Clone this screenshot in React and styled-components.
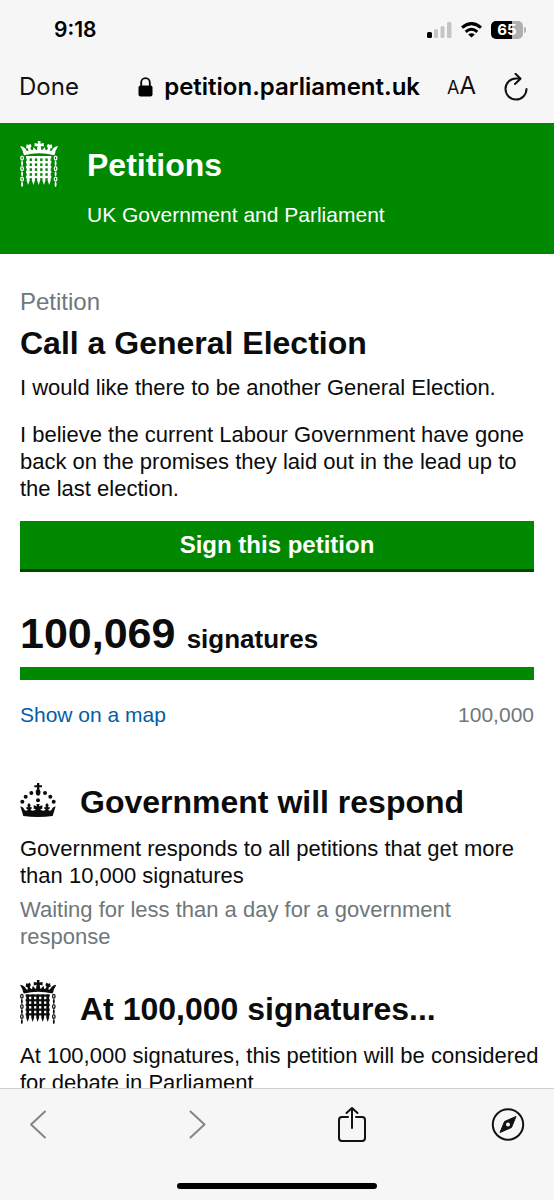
import React from 'react'
import styled, { createGlobalStyle } from 'styled-components'

const green = '#008800'
const ink = '#0b0c0c'
const grey = '#6f777b'
const chrome = '#f6f6f7'
const systemFont = 'Inter, "Liberation Sans", sans-serif'

const GlobalStyle = createGlobalStyle`
  * {
    box-sizing: border-box;
  }
  body {
    margin: 0;
    background: #fff;
    color: ${ink};
    font: 21px/27px "Liberation Sans", Arial, sans-serif;
  }
  h1, h2, p {
    margin: 0;
  }
`

const links = [0, 1, 2, 3, 4, 5]
const bars = [50, 66, 82, 98, 114]

const Portcullis = ({ width, height }) => {
  return (
    <svg width={width} height={height} viewBox='30 34 115 140' fill='currentColor' aria-hidden='true'>
      <path d='M42 77 L38 67 Q88 54 138 67 L134 77 Q88 66 42 77 Z' />
      <path d='M42 72 L30 49 Q40 50 45 56 L52 66 Z M134 72 L146 49 Q136 50 131 56 L124 66 Z' />
      <path d='M56 68 L54 57 L48 55 L50 44 L56 46 L61 42 L65 50 L61 56 L68 66 Z M120 68 L122 57 L128 55 L126 44 L120 46 L115 42 L111 50 L115 56 L108 66 Z' />
      <path d='M84 34 h8 v8 l10 -2 v11 l-9 -2 l2 14 h-14 l2 -14 l-9 2 v-11 l10 2 z' />
      <path d='M68 64 L71 52 L79 62 Z M108 64 L105 52 L97 62 Z' />
      {bars.map(x => {
        return <path key={x} d={`M${x} 80 h9 v74 l-4.5 14 l-4.5 -14 z`} />
      })}
      {[80, 95, 110, 125, 140].map(y => {
        return <rect key={y} x='48' y={y} width='77' height='7' />
      })}
      <g fill='none' stroke='currentColor' strokeWidth='4'>
        {links.map(i => {
          return (
            <React.Fragment key={i}>
              <ellipse cx='36' cy={86 + i * 16} rx={i % 2 ? 1 : 4} ry='6' />
              <ellipse cx='138' cy={86 + i * 16} rx={i % 2 ? 1 : 4} ry='6' />
            </React.Fragment>
          )
        })}
      </g>
    </svg>
  )
}

const Crown = () => {
  return (
    <svg width='36' height='34' viewBox='31 32 108 102' fill='currentColor' aria-hidden='true'>
      <path d='M82 32 h7 v7 h8 v6 h-8 v6 q5 4 3 13 q-2 6 -6.500 6 q-5 0 -7 -6 q-2 -9 3.500 -13 v-6 h-8 v-6 h8 z' />
      <circle cx='65' cy='62' r='6' />
      <circle cx='106' cy='62' r='6' />
      <circle cx='48' cy='73' r='6' />
      <circle cx='122' cy='73' r='6' />
      <circle cx='38' cy='88' r='6' />
      <circle cx='132' cy='88' r='6' />
      <circle cx='85' cy='84' r='6' />
      <path d='M32 102 Q42 104 45 113 Q49 118 55 112 L50 109 V104 L55 105 L53 98 L58 92 L63 98 L61 105 L66 104 V109 L62 112 Q70 119 79 111 L72 109 V99 L82 102 L80 95 H90 L88 102 L98 99 V109 L91 111 Q100 119 108 112 L104 109 V104 L109 105 L107 98 L112 92 L117 98 L115 105 L120 104 V109 L115 112 Q121 118 125 113 Q128 104 138 102 L129 131 Q85 137 41 131 Z' />
    </svg>
  )
}

const App = () => {
  return (
    <Screen>
      <GlobalStyle />
      <StatusBar>
        <span>9:18</span>
        <StatusIcons>
          <svg width='25' height='16' viewBox='0 0 25 16' aria-hidden='true'>
            <rect x='0' y='10' width='5' height='6' rx='1.5' />
            <g fill='#c5c5c7'>
              <rect x='7' y='7' width='4' height='9' rx='1.5' />
              <rect x='13.500' y='4' width='4' height='12' rx='1.5' />
              <rect x='20' y='0' width='4.500' height='16' rx='1.5' />
            </g>
          </svg>
          <svg width='21' height='16' viewBox='0 0 21 16' fill='none' stroke='#000' strokeWidth='3' aria-hidden='true'>
            <path d='M1 5.600 Q10.500 -2.400 20 5.600' />
            <path d='M4.700 9.800 Q10.500 4.700 16.300 9.800' />
            <path d='M10.500 15.500 L7.200 12.500 Q10.500 10 13.800 12.500 Z' fill='#000' stroke='none' />
          </svg>
          <Battery>
            <Charge>65</Charge>
          </Battery>
        </StatusIcons>
      </StatusBar>
      <AddressBar>
        <ChromeButton>Done</ChromeButton>
        <Address>
          <svg width='15' height='20' viewBox='0 0 15 20' aria-hidden='true'>
            <path d='M3.200 9 V5.500 a4.300 4.300 0 0 1 8.600 0 V9' fill='none' stroke='#000' strokeWidth='1.800' />
            <rect x='0.500' y='8.500' width='14' height='11' rx='2' />
          </svg>
          petition.parliament.uk
        </Address>
        <TextSize aria-label='Text size'>
          <small>A</small>A
        </TextSize>
        <ChromeButton aria-label='Reload'>
          <svg width='24' height='28' viewBox='0 0 24 28' fill='none' stroke='#111' strokeWidth='2' strokeLinecap='round' strokeLinejoin='round'>
            <path d='M22.500 16 A10.500 10.500 0 1 1 12 5.500 H16' />
            <path d='M11.500 0.800 L16.500 5.800 L11 11' />
          </svg>
        </ChromeButton>
      </AddressBar>
      <Content>
        <Banner>
          <Portcullis width={38} height={46} />
          <div>
            <SiteName href='#petitions'>Petitions</SiteName>
            <p>UK Government and Parliament</p>
          </div>
        </Banner>
        <Main>
          <Caption>Petition</Caption>
          <Title>Call a General Election</Title>
          <Copy>I would like there to be another General Election.</Copy>
          <Background>
            I believe the current Labour Government have gone back on the promises they laid out in the lead up to the last election.
          </Background>
          <SignButton>Sign this petition</SignButton>
          <Count>
            <strong>100,069</strong> signatures
          </Count>
          <Progress role='progressbar' aria-label='Signatures' aria-valuenow='100069' aria-valuemax='100000' />
          <Totals>
            <MapLink href='#map'>Show on a map</MapLink>
            <Goal>100,000</Goal>
          </Totals>
          <Threshold>
            <SectionHead>
              <Crown />
              <h2>Government will respond</h2>
            </SectionHead>
            <Copy>Government responds to all petitions that get more than 10,000 signatures</Copy>
            <Waiting>Waiting for less than a day for a government response</Waiting>
          </Threshold>
          <Threshold>
            <SectionHead>
              <Portcullis width={36} height={44} />
              <h2>At 100,000 signatures...</h2>
            </SectionHead>
            <Copy>At 100,000 signatures, this petition will be considered for debate in Parliament</Copy>
          </Threshold>
        </Main>
      </Content>
      <BottomBar>
        <Toolbar>
          <ChromeButton aria-label='Back'>
            <svg width='36' height='36' viewBox='0 0 36 36' fill='none' stroke='#858587' strokeWidth='2' strokeLinecap='round' strokeLinejoin='round'>
              <path d='M25 4.500 L11 17.500 L25 30.500' />
            </svg>
          </ChromeButton>
          <ChromeButton aria-label='Forward'>
            <svg width='36' height='36' viewBox='0 0 36 36' fill='none' stroke='#858587' strokeWidth='2' strokeLinecap='round' strokeLinejoin='round'>
              <path d='M13.500 4.500 L27.500 17.500 L13.500 30.500' />
            </svg>
          </ChromeButton>
          <ChromeButton aria-label='Share'>
            <svg width='36' height='36' viewBox='0 0 36 36' fill='none' stroke='#111' strokeWidth='2' strokeLinecap='round' strokeLinejoin='round'>
              <path d='M15 10 H9 Q6 10 6 13 V31 Q6 34 9 34 H29 Q32 34 32 31 V13 Q32 10 29 10 H23' />
              <path d='M19 21 V1 M13.500 6 L19 1 L24.500 6' />
            </svg>
          </ChromeButton>
          <ChromeButton aria-label='Open in browser'>
            <svg width='36' height='36' viewBox='0 0 36 36'>
              <circle cx='18' cy='17.500' r='15.200' fill='none' stroke='#111' strokeWidth='2' />
              <path d='M26 9.500 L21.500 20.500 L10 25.500 L14.500 14.500 Z' fill='#111' stroke='#111' strokeLinejoin='round' />
              <circle cx='18' cy='17.500' r='2' fill={chrome} />
            </svg>
          </ChromeButton>
        </Toolbar>
        <HomeIndicator />
      </BottomBar>
    </Screen>
  )
}

const Screen = styled.div`
  display: flex;
  flex-direction: column;
  height: 100vh;
`
const StatusBar = styled.div`
  display: flex;
  justify-content: space-between;
  align-items: center;
  height: 60px;
  padding: 0 31px 0 54px;
  background: ${chrome};
  color: #000;
  font: 600 21px/24px ${systemFont};
`
const StatusIcons = styled.div`
  display: flex;
  align-items: center;
  gap: 9px;
`
const Battery = styled.span`
  position: relative;
  width: 32px;
  height: 18px;
  border-radius: 5px;
  background: linear-gradient(90deg, #000 65%, #b0b0b2 65%);
  &::after {
    content: '';
    position: absolute;
    top: 6px;
    right: -3px;
    width: 2px;
    height: 6px;
    border-radius: 0 2px 2px 0;
    background: #b0b0b2;
  }
`
const Charge = styled.span`
  display: block;
  color: #fff;
  font: 700 15px/18px ${systemFont};
  text-align: center;
`
const AddressBar = styled.div`
  display: flex;
  align-items: center;
  height: 63px;
  padding: 0 26px 10px 19px;
  background: ${chrome};
`
const ChromeButton = styled.button`
  display: flex;
  padding: 0;
  border: 0;
  background: none;
  color: #111;
  font: 400 24px/30px ${systemFont};
`
const Address = styled.div`
  display: flex;
  flex: 1;
  justify-content: flex-end;
  align-items: center;
  gap: 11px;
  margin-right: 27px;
  color: #000;
  font: 600 24px/30px ${systemFont};
`
const TextSize = styled(ChromeButton)`
  align-items: baseline;
  margin-right: 28px;
  small {
    font-size: 18px;
  }
`
const Content = styled.div`
  flex: 1;
  min-height: 0;
  overflow-y: auto;
  scrollbar-width: none;
`
const Banner = styled.header`
  display: flex;
  gap: 29px;
  padding: 18px 20px 26px;
  background: ${green};
  color: #fff;
  p {
    margin-top: 18px;
  }
`
const SiteName = styled.a`
  display: block;
  padding-top: 6px;
  color: #fff;
  font-size: 32px;
  font-weight: 700;
  line-height: 36px;
  text-decoration: none;
`
const Main = styled.main`
  padding: 34px 20px;
`
const Caption = styled.p`
  color: ${grey};
  font-size: 24px;
`
const Title = styled.h1`
  padding: 10px 0 13px;
  font-size: 32px;
  line-height: 36px;
`
// runs slightly into the right gutter
const Copy = styled.p`
  margin-right: -6px;
  font-size: 22px;
`
const Background = styled(Copy)`
  margin-top: 20px;
`
const SignButton = styled.button`
  width: 100%;
  margin-top: 19px;
  padding: 10px;
  border: 0;
  border-bottom: 3px solid #004400;
  background: ${green};
  color: #fff;
  font: 700 24px/28px "Liberation Sans", Arial, sans-serif;
`
const Count = styled.p`
  margin-top: 37px;
  font-size: 26px;
  font-weight: 700;
  line-height: 48px;
  strong {
    margin-right: 4px;
    font-size: 43px;
  }
`
const Progress = styled.div`
  height: 13px;
  margin-top: 4px;
  background: ${green};
`
const Totals = styled.div`
  display: flex;
  justify-content: space-between;
  margin-top: 21px;
`
const MapLink = styled.a`
  color: #005ea5;
  text-decoration: none;
`
const Goal = styled.p`
  color: ${grey};
`
const Threshold = styled.section`
  margin-top: 35px;
  & + & {
    margin-top: 20px;
  }
`
const SectionHead = styled.div`
  display: flex;
  align-items: flex-end;
  gap: 24px;
  height: 57px;
  margin-bottom: 15px;
  svg {
    margin-bottom: 3px;
  }
  h2 {
    font-size: 32px;
    line-height: 36px;
  }
`
const Waiting = styled(Copy)`
  margin-top: 7px;
  color: ${grey};
`
const BottomBar = styled.nav`
  padding: 18px 0 11px;
  border-top: 1px solid #cfcfd1;
  background: ${chrome};
`
const Toolbar = styled.div`
  display: flex;
  justify-content: space-between;
  height: 76px;
  padding: 0 28px 0 20px;
`
const HomeIndicator = styled.div`
  width: 36%;
  height: 6px;
  margin: 0 auto;
  border-radius: 3px;
  background: #000;
`
export default App
